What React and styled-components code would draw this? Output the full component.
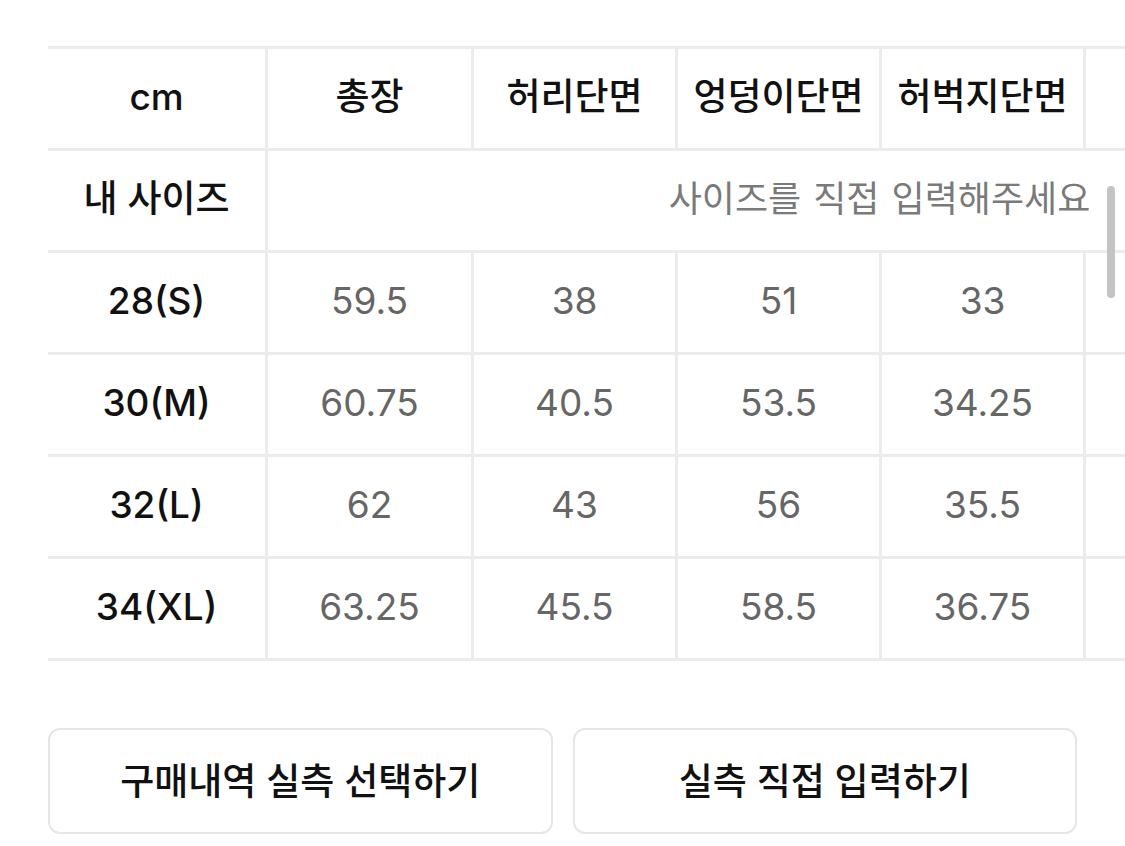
import React from "react";
import styled, { createGlobalStyle } from "styled-components";

const GlobalStyle = createGlobalStyle`
  html, body {
    margin: 0;
    padding: 0;
    background: #ffffff;
    overflow: hidden;
  }
  body {
    font-family: Inter, "Noto Sans CJK KR", "Noto Sans", sans-serif;
    color: #111;
    -webkit-font-smoothing: antialiased;
  }
  * { box-sizing: border-box; }
`;

const Page = styled.div`
  padding: 46px 0 0 48px;
  width: 1125px;
`;

const Frame = styled.div`
  position: relative;
  overflow: hidden;
`;

const Table = styled.div`
  display: grid;
  grid-template-columns: 217px 203px repeat(5, 201px);
  grid-auto-rows: 99px;
  gap: 3px;
  padding: 3px 0;
  background: #ececec;
  width: max-content;
`;

const Cell = styled.div`
  background: #fff;
  display: flex;
  align-items: center;
  justify-content: center;
  padding-bottom: 4px;
  font-size: 37px;
  line-height: 1;
  white-space: nowrap;
  color: ${(p) => (p.$head ? "#111" : "#666")};
  font-weight: ${(p) => (p.$head ? 500 : 400)};
  grid-column: ${(p) => (p.$span ? `span ${p.$span}` : "auto")};
`;

const Placeholder = styled.span`
  color: #7a7a7a;
  font-weight: 400;
  font-size: 36px;
  word-spacing: 2px;
`;

const ScrollThumb = styled.div`
  position: absolute;
  top: 140px;
  right: 10px;
  width: 8px;
  height: 112px;
  border-radius: 4px;
  background: #c4c4c4;
`;

const Actions = styled.div`
  display: grid;
  grid-template-columns: 1fr 1fr;
  gap: 20px;
  margin-top: 67px;
  padding-right: 48px;
`;

const ActionButton = styled.button`
  height: 106px;
  padding: 0 0 5px;
  border: 2px solid #e6e6e6;
  border-radius: 12px;
  background: #fff;
  font-family: inherit;
  font-size: 37px;
  font-weight: 500;
  color: #111;
  cursor: pointer;
`;

const headers = ["총장", "허리단면", "엉덩이단면", "허벅지단면"];
const rows = [
  { size: "28(S)", values: ["59.5", "38", "51", "33"] },
  { size: "30(M)", values: ["60.75", "40.5", "53.5", "34.25"] },
  { size: "32(L)", values: ["62", "43", "56", "35.5"] },
  { size: "34(XL)", values: ["63.25", "45.5", "58.5", "36.75"] },
];

export default function App() {
  return (
    <>
      <GlobalStyle />
      <Page>
        <Frame>
          <Table>
            <Cell $head>cm</Cell>
            {headers.map((h) => (
              <Cell $head key={h}>{h}</Cell>
            ))}
            <Cell $head />
            <Cell $head />
            <Cell $head>내 사이즈</Cell>
            <Cell $span={6}>
              <Placeholder>사이즈를 직접 입력해주세요</Placeholder>
            </Cell>
            {rows.map((r) => (
              <React.Fragment key={r.size}>
                <Cell $head>{r.size}</Cell>
                {r.values.map((v, i) => (
                  <Cell key={i}>{v}</Cell>
                ))}
                <Cell />
                <Cell />
              </React.Fragment>
            ))}
          </Table>
          <ScrollThumb />
        </Frame>
        <Actions>
          <ActionButton>구매내역 실측 선택하기</ActionButton>
          <ActionButton>실측 직접 입력하기</ActionButton>
        </Actions>
      </Page>
    </>
  );
}
